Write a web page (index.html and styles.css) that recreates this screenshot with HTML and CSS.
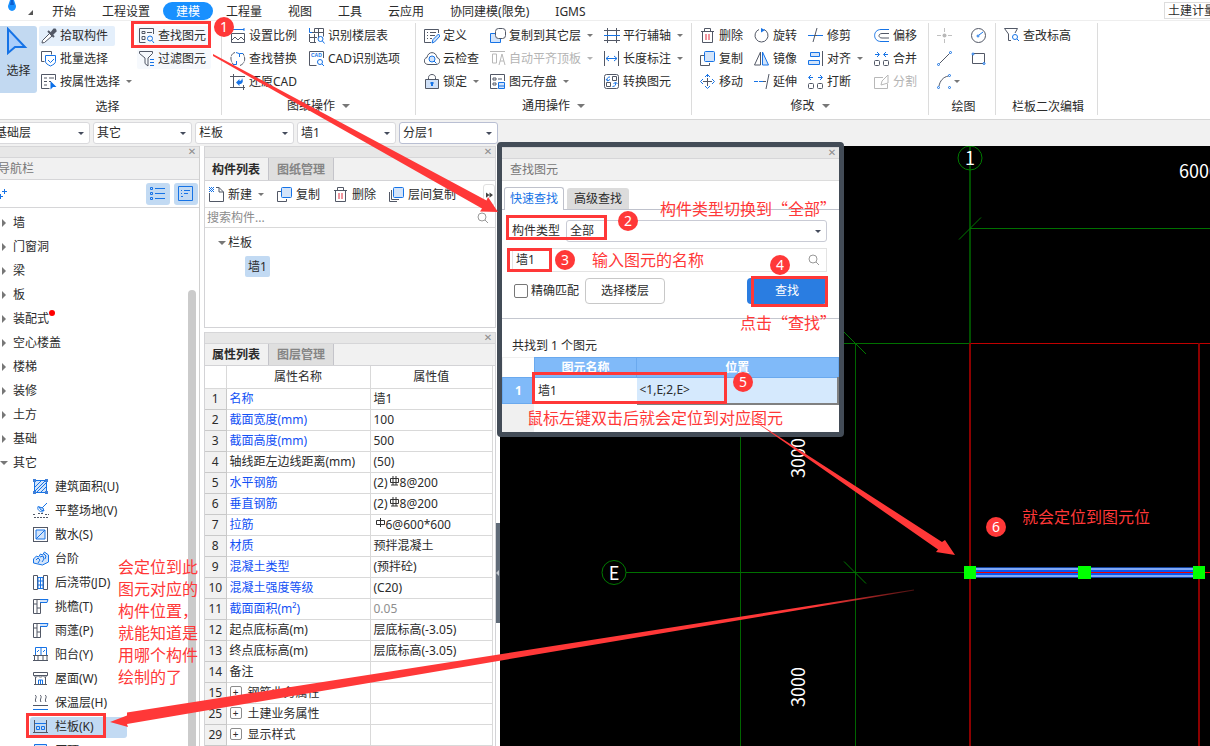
FILE: index.html
```html
<!DOCTYPE html>
<html lang="zh-CN">
<head>
<meta charset="utf-8">
<title>土建计量</title>
<link rel="stylesheet" href="styles.css">
</head>
<body>
<svg class="sprite" aria-hidden="true">
  <symbol id="pick" viewBox="0 0 16 16"><path d="M8.500 5.500l2.500 2.500-7.500 6.500L1 15l.5-2.500z" class="d w"/><path d="M7 3l6 6" stroke="#525866" stroke-width="2"/><path d="M9 5l3.500-4.500h2L15.500 2v1.500L11.500 7.500z" fill="#525866"/></symbol>
  <symbol id="batch" viewBox="0 0 16 16"><path d="M3.500 10.500H.5V.5h10v3" class="d"/><path d="M4.500 4.500h10v6c0 2-2 3-5 4.500-3-1.500-5-2.500-5-4.500z" class="b w"/><path d="M7 9l2.500 2.500L13 8" class="b"/></symbol>
  <symbol id="attr" viewBox="0 0 16 16"><path d="M14.500 6V.5H.5v14h8M3 4h3m2 0h5M3 7.500h3m2 0h2M3 11h3" class="d"/><path d="M9.500 7v8.500l2.500-2.500h3.500z" fill="#0b6fe8"/></symbol>
  <symbol id="find" viewBox="0 0 16 16"><path d="M14.500 6V.5H.5v14h6M3 3.500h3v2H3zM8 4.500h5M3 8.500h3v3H3z" class="d"/><circle cx="11" cy="10.500" r="2.500" class="b"/><path d="M13 12.500l2 2.500" class="b"/></symbol>
  <symbol id="filter" viewBox="0 0 16 16"><path d="M.5.5h13v2L9 7v8l-3-2.500V7L.5 2.500z" class="d"/><path d="M11 8.500h4M11 11.500h4M11 14.500h4" class="b"/></symbol>
  <symbol id="scale" viewBox="0 0 16 16"><path d="M1 1.500h13M1 0v3M14 0v3" class="b"/><path d="M1.500 5.500h13v9h-13zM2 12l3-3 3 3 3-3 3 3" class="d"/></symbol>
  <symbol id="replace" viewBox="0 0 16 16"><path d="M5 1.500C0 3 0 9 3 13M10 14.500c5-2 6-7 3-12" class="d" stroke-dasharray="5 1"/><path d="M3 13.500h3.500V10M13 2.500H9.500V6M6 1.500l3 1" class="b"/></symbol>
  <symbol id="restore" viewBox="0 0 16 16"><path d="M3.500 0v14M0 2.500h15M0 13.500h15M13.500 11v5" class="d"/><path d="M6 8.500L9.500 5v2C11 7 12 6 12 4c2 4 0 6-2.500 6v2z" fill="#1673e6"/></symbol>
  <symbol id="floor" viewBox="0 0 16 16"><path d="M5.500 4.500v-4h9v8M9.500 1v8M1 14.500h6M.5 6v8M5.500 6v8M1 4.500h13M1 9.500h7" class="d"/><path d="M.5 0v4.500H3" class="b"/><circle cx="11.500" cy="11" r="2.500" class="b"/><path d="M13.500 13l2 2.500" class="b"/></symbol>
  <symbol id="cad" viewBox="0 0 16 16"><path d="M14.500 7V.5H.5v14h7" class="d"/><text x="2" y="6" font-size="5" font-family="Liberation Sans" font-weight="700" fill="#1673e6">CAD</text><circle cx="11" cy="11" r="2.500" class="b"/><path d="M13 13l2 2" class="b"/></symbol>
  <symbol id="define" viewBox="0 0 16 16"><path d="M14.500 5V1.500h-14v13H7M3 4.500h1m2 0h6M3 7.500h1m2 0h5M3 10.500h1m2 0h2" class="d"/><path d="M8 15l1-3.500L14.500 6l1.500 2-5.500 6z" class="bf"/></symbol>
  <symbol id="cloud" viewBox="0 0 16 16"><path d="M4 13.500C-1 13-.5 7 3 6.500 4 0 12 0 13 6.500c4 1 3.500 7-1 7z" class="d"/><circle cx="8" cy="8" r="3" class="bf"/><path d="M10 10l2.500 2.500" class="b"/></symbol>
  <symbol id="lock" viewBox="0 0 16 16"><path d="M4.500 6V3.500c0-4 7-4 7 0V6" class="d"/><path d="M1.500 5.500h13v9h-13z" class="d tint"/><path d="M8 8v4M6.500 9h3" stroke="#1673e6" stroke-width="2"/></symbol>
  <symbol id="copyto" viewBox="0 0 16 16"><path d="M5 5.500H.5v9h10V11" class="bf"/><rect x="5.500" y=".5" width="10" height="10" rx="3" class="d w"/></symbol>
  <symbol id="aligntop" viewBox="0 0 16 16"><path d="M0 .5h15M2.500 3v9h4V3zM9 14l3-11 3 11M10 10h4" fill="none" stroke="#b8b8b8"/></symbol>
  <symbol id="savel" viewBox="0 0 16 16"><path d="M14.500 7V.5H.5v14h7M3 4h3v2H3zM8 5h4M3 9h3v2H3z" class="d"/><path d="M8.500 8.500h6v6h-6zM8.500 12h6" class="bf"/></symbol>
  <symbol id="axis" viewBox="0 0 16 16"><path d="M3.500 0v15M12.500 0v15M0 2.500h16M0 12.500h16" class="d"/><path d="M0 7.500h16" class="b"/></symbol>
  <symbol id="dim" viewBox="0 0 16 16"><path d="M.5 0v15M14.500 0v15" class="d"/><path d="M2 7.500h11M5 5L2 7.500 5 10M10 5l3 2.500-3 2.500" class="b"/></symbol>
  <symbol id="convert" viewBox="0 0 16 16"><rect x=".5" y=".5" width="14" height="14" rx="2" class="d"/><path d="M8.500 2.500h4v4h-4zM2.500 8.500h4v4h-4z" class="d"/><path d="M6 3C3 3 3 5 3.500 7M2 5l1.500 2L6 5.500M8.500 12.500c3 0 3.500-2 3-4M9.500 10l2-2 2 2" class="b"/></symbol>
  <symbol id="trash" viewBox="0 0 16 16"><path d="M1 3.500h13M4.500 3V.5h6V3M2.500 3.500v11h10v-11" class="d"/><path d="M6 6v6M9 6v6" stroke="#e02b3c" fill="none"/></symbol>
  <symbol id="copy" viewBox="0 0 16 16"><path d="M4 4.500H.5v10h9V12" class="d"/><rect x="4.500" y=".5" width="10" height="10" rx="1" class="bf"/></symbol>
  <symbol id="move" viewBox="0 0 16 16"><path d="M7.500 4v8M3 7.500h9" class="d"/><path d="M7.500 0v3M5 3l2.500-2.500L10 3M5 12l2.500 2.500L10 12M3 5L.5 7.500 3 10M12 5l2.500 2.500L12 10" class="b"/></symbol>
  <symbol id="rotate" viewBox="0 0 16 16"><path d="M10 1.500a6.500 6.500 0 1 1-5 0" class="d"/><path d="M7 0l4 2-4 2.500z" fill="#1673e6"/></symbol>
  <symbol id="mirror" viewBox="0 0 16 16"><path d="M6.500 1v13h-6z" class="d"/><path d="M8.500 1v13h6z" class="bf"/></symbol>
  <symbol id="extend" viewBox="0 0 16 16"><path d="M0 7.500h9" class="b" stroke-dasharray="4 1"/><path d="M9 7.500h3M15 0l-3 15" class="d"/></symbol>
  <symbol id="trim" viewBox="0 0 16 16"><path d="M5 7.500h4M9 0L5 14" class="d"/><path d="M0 7.500h6M9 7.500h7" class="b" stroke-dasharray="6 3 3 1 3"/></symbol>
  <symbol id="alignr" viewBox="0 0 16 16"><path d="M2.500 1.500h9v4h-9zM.5 9.500h11v4H.5z" class="bf"/><path d="M14.500 0v15" class="d"/></symbol>
  <symbol id="brk" viewBox="0 0 16 16"><rect x=".5" y="9.500" width="5" height="5" rx="1" class="d"/><rect x="9.500" y="9.500" width="5" height="5" rx="1" class="d"/><path d="M1 3.500h4M3 1L.5 3.500 3 6M14 3.500h-4M12 1l2.500 2.500L12 6" class="b"/></symbol>
  <symbol id="merge" viewBox="0 0 16 16"><rect x=".5" y="9.500" width="5" height="5" rx="1" class="d"/><rect x="9.500" y="9.500" width="5" height="5" rx="1" class="d"/><path d="M1 3.500h4M3 1l2.500 2.500L3 6M14 3.500h-4M12 1L9.500 3.500 12 6" class="b"/></symbol>
  <symbol id="offset" viewBox="0 0 16 16"><path d="M15 1.500H7C-1.500 1.500-1.500 13.500 7 13.500h8" class="b"/><path d="M15 5.500H8C4 5.500 4 10 8 10h7" class="d"/></symbol>
  <symbol id="split" viewBox="0 0 16 16"><path d="M9 3.500H.5v11h13V10M7 11l1-4 6-6v8z" fill="none" stroke="#b8b8b8"/></symbol>
  <symbol id="point" viewBox="0 0 16 16"><path d="M7.500 0v4M7.500 11v4M0 7.500h4M11 7.500h4" stroke="#c0c0c0"/><circle cx="7.500" cy="7.500" r="2" fill="#b8b8b8"/></symbol>
  <symbol id="circ" viewBox="0 0 16 16"><circle cx="7.500" cy="7.500" r="7" class="d"/><circle cx="7" cy="8" r="1" class="b"/><path d="M8 7l4-3" class="b"/></symbol>
  <symbol id="line" viewBox="0 0 16 16"><path d="M2.500 12.500l10-10" class="d"/><circle cx="1.500" cy="13.500" r="1" class="b"/><circle cx="13.500" cy="1.500" r="1" class="b"/></symbol>
  <symbol id="rct" viewBox="0 0 16 16"><path d="M2.500 2.500h11v10h-12v-9" class="d"/><circle cx="2" cy="3" r="1" class="b w"/><circle cx="13" cy="12.500" r="1" class="b w"/></symbol>
  <symbol id="arc" viewBox="0 0 16 16"><path d="M2 12C3 7 6 3 11.500 2" class="d"/><circle cx="1.500" cy="13.500" r="1" class="b"/><circle cx="12.500" cy="1.500" r="1" class="b"/><circle cx="12.500" cy="13.500" r="1" class="b"/></symbol>
  <symbol id="elev" viewBox="0 0 16 16"><path d="M7 12.500H4.500V6L.5.500h13L11 5" class="d"/><circle cx="11" cy="9" r="2.500" class="b"/><path d="M13 11l2 2" class="b"/></symbol>
  <symbol id="newdoc" viewBox="0 0 16 16"><path d="M.5 6v8.500h14V5L10 .5H7M10 .5V5h4.500" class="d"/><path d="M0 .5h5M0 2.500h5M0 4.500h5" stroke="#1673e6" stroke-dasharray="1 1"/><path d="M1 1.500h4M1 3.500h4" stroke="#1673e6" stroke-dasharray="1 1"/></symbol>
  <symbol id="layercopy" viewBox="0 0 16 16"><path d="M.5 5v9.500H8M2.500 3v9.500H10" class="d"/><rect x="4.500" y=".5" width="10" height="10" rx="1" class="bf"/></symbol>
  <symbol id="area" viewBox="0 0 16 16"><path d="M1.500 1.500h12v12h-12zM2 8l6-6M2 12l10-10M4 13l9-9M8 13l5-5" class="bf"/><path d="M0 0h3v3H0zM12 0h3v3h-3zM0 12h3v3H0zM12 12h3v3h-3z" fill="#3f7fd8"/></symbol>
  <symbol id="ground" viewBox="0 0 16 16"><path d="M5 3.500c-1 3 1 5 5 5.500M5 3.500l2 1M8 6l6-6" class="b"/><path d="M6 4l4 1 1 3-3-1z" class="bf"/><path d="M0 11.500h3m2-1h5m2 1h4M1 14.500h14" class="d" stroke-dasharray="2 1"/></symbol>
  <symbol id="water" viewBox="0 0 16 16"><rect x=".5" y=".5" width="14" height="14" class="d"/><path d="M3 3h9v9H3zM3 12l9-9" class="bf"/></symbol>
  <symbol id="stair" viewBox="0 0 16 16"><path d="M.5 8l3-3 2 1 2-3 2 1 2-3 4 3v7l-6 3-9-2z" class="bf"/><path d="M3 9l2-2 2 2-2 3M7 6l3-1 1 3-2 3M11 3l2 2-1 3" class="b"/></symbol>
  <symbol id="strip" viewBox="0 0 16 16"><path d="M.5.5h4v14h-4zM10.500.5h4v14h-4z" class="d"/><path d="M5 2.500h5v11H5zM7.500 2v12M5 6h5M5 10h5" class="b"/></symbol>
  <symbol id="eave" viewBox="0 0 16 16"><path d="M.5.500h7v14h-7zM4 1v14M.5 5h3.500M4 9h3.500" class="d"/><path d="M7 .5h8l-1 3H7" class="bf"/></symbol>
  <symbol id="balcony" viewBox="0 0 16 16"><path d="M2.500 8V.5h11V8M8 1v8M4 5l2-2M10 5l2-2" class="b"/><path d="M0 8.500h15M0 13.500h15M1.500 8.500v5M5 8.500v5M10 8.500v5M14 8.500v5" class="d"/></symbol>
  <symbol id="roof" viewBox="0 0 16 16"><path d="M.5 1.500h14v3H.5zM2.500 6v7.500M12.500 6v7.500M1 13.500h13M1 4.500c1 2 3 2 4 0 1 2 4 2 5 0 1 2 3 2 4 0" class="d"/><path d="M5.500 13V9h4v4M7.500 9v4" class="b"/></symbol>
  <symbol id="insul" viewBox="0 0 16 16"><path d="M2 0c3 2-1 4 1 7M7 0c3 2-1 4 1 7M12 0c3 2-1 4 1 7M0 10.500h15" class="d"/><path d="M0 14.500h15" class="b"/></symbol>
  <symbol id="rail" viewBox="0 0 16 16"><path d="M1.500 1v12M13.500 1v12M0 13.500h15" class="d"/><path d="M2 4.500h11M3.500 7.500h3v3h-3zM8.500 7.500h3v3h-3z" class="b"/></symbol>
  <symbol id="coping" viewBox="0 0 16 16"><path d="M1.500 1.500h12v13h-12z" class="bf"/></symbol>
  <symbol id="search" viewBox="0 0 16 16"><circle cx="7" cy="7" r="4" fill="none" stroke="#999"/><path d="M10 10l3 3" stroke="#999"/></symbol>
  <symbol id="list" viewBox="0 0 16 16"><path d="M.5 1.500h2v2h-2zM.5 6.500h2v2h-2zM.5 11.500h2v2h-2zM5 2.500h10M5 7.500h10M5 12.500h10" class="b"/></symbol>
  <symbol id="card" viewBox="0 0 16 16"><path d="M.5.500h14v14H.5zM3 4.500h1m2 0h6M3 7.500h1m2 0h4M3 10.500h2" class="b"/></symbol>
  <symbol id="r3" viewBox="0 0 10 12"><path d="M.5 2.500h8v4h-8zM3 0v9M6 0v9M1 9h7" fill="none" stroke="#333"/></symbol>
  <symbol id="r1" viewBox="0 0 10 12"><path d="M.5 2.500h8v4h-8zM4.500 0v9" fill="none" stroke="#333"/></symbol>
</svg>

<header class="menubar">
  <svg class="app-logo" viewBox="0 0 12 13"><path d="M4 0h4l2 6a4 5 0 1 1-8 0z" fill="#1890ff"/><path d="M5 0h2l1 5H4z" fill="#0c5fd0"/></svg>
  <svg class="app-corner" viewBox="0 0 5 5"><path d="M5 0v5H0z" fill="#555"/></svg>
  <nav class="menu">
    <button>开始</button><button>工程设置</button><button class="active">建模</button><button>工程量</button><button>视图</button><button>工具</button><button>云应用</button><button>协同建模(限免)</button><button>IGMS</button>
  </nav>
  <div class="product">土建计量</div>
</header>

<section class="ribbon">
  <div class="group g-select">
    <div class="tools">
      <button class="big"><svg viewBox="0 0 24 28"><path d="M3 2v24l7-6h10z" fill="#a9cdfb" stroke="#1673e6" stroke-width="2"/></svg>选择</button>
      <div class="grid">
        <button class="tool hot"><svg><use href="#pick"/></svg>拾取构件</button>
        <button class="tool"><svg><use href="#batch"/></svg>批量选择</button>
        <button class="tool"><svg><use href="#attr"/></svg>按属性选择<i class="caret"></i></button>
        <button class="tool warm"><svg><use href="#find"/></svg>查找图元</button>
        <button class="tool warm"><svg><use href="#filter"/></svg>过滤图元</button>
      </div>
    </div>
    <div class="label low">选择</div>
  </div>
  <div class="group g-drawing">
    <div class="grid">
      <button class="tool"><svg><use href="#scale"/></svg>设置比例</button>
      <button class="tool"><svg><use href="#replace"/></svg>查找替换</button>
      <button class="tool"><svg><use href="#restore"/></svg>还原CAD</button>
      <button class="tool"><svg><use href="#floor"/></svg>识别楼层表</button>
      <button class="tool"><svg><use href="#cad"/></svg>CAD识别选项</button>
    </div>
    <div class="label">图纸操作<i class="caret wide"></i></div>
  </div>
  <div class="group g-common">
    <div class="grid">
      <button class="tool"><svg><use href="#define"/></svg>定义</button>
      <button class="tool"><svg><use href="#cloud"/></svg>云检查</button>
      <button class="tool"><svg><use href="#lock"/></svg>锁定<i class="caret"></i></button>
      <button class="tool"><svg><use href="#copyto"/></svg>复制到其它层<i class="caret"></i></button>
      <button class="tool" disabled><svg><use href="#aligntop"/></svg>自动平齐顶板<i class="caret"></i></button>
      <button class="tool"><svg><use href="#savel"/></svg>图元存盘<i class="caret"></i></button>
      <button class="tool"><svg><use href="#axis"/></svg>平行辅轴<i class="caret"></i></button>
      <button class="tool"><svg><use href="#dim"/></svg>长度标注<i class="caret"></i></button>
      <button class="tool"><svg><use href="#convert"/></svg>转换图元</button>
    </div>
    <div class="label">通用操作<i class="caret wide"></i></div>
  </div>
  <div class="group g-modify">
    <div class="grid">
      <button class="tool"><svg><use href="#trash"/></svg>删除</button>
      <button class="tool"><svg><use href="#copy"/></svg>复制</button>
      <button class="tool"><svg><use href="#move"/></svg>移动</button>
      <button class="tool"><svg><use href="#rotate"/></svg>旋转</button>
      <button class="tool"><svg><use href="#mirror"/></svg>镜像</button>
      <button class="tool"><svg><use href="#extend"/></svg>延伸</button>
      <button class="tool"><svg><use href="#trim"/></svg>修剪</button>
      <button class="tool"><svg><use href="#alignr"/></svg>对齐<i class="caret"></i></button>
      <button class="tool"><svg><use href="#brk"/></svg>打断</button>
      <button class="tool"><svg><use href="#offset"/></svg>偏移</button>
      <button class="tool"><svg><use href="#merge"/></svg>合并</button>
      <button class="tool" disabled><svg><use href="#split"/></svg>分割</button>
    </div>
    <div class="label">修改<i class="caret wide"></i></div>
  </div>
  <div class="group g-draw">
    <div class="grid">
      <button class="tool" aria-label="点"><svg><use href="#point"/></svg></button>
      <button class="tool" aria-label="直线"><svg><use href="#line"/></svg></button>
      <button class="tool" aria-label="弧"><svg><use href="#arc"/></svg><i class="caret near"></i></button>
      <button class="tool" aria-label="圆"><svg><use href="#circ"/></svg></button>
      <button class="tool" aria-label="矩形"><svg><use href="#rct"/></svg></button>
    </div>
    <div class="label low">绘图</div>
  </div>
  <div class="group g-edit">
    <div class="grid"><button class="tool"><svg><use href="#elev"/></svg>查改标高</button></div>
    <div class="label low">栏板二次编辑</div>
  </div>
</section>

<section class="combobar">
  <span class="combo"><select aria-label="楼层"><option>基础层</option></select></span>
  <span class="combo"><select aria-label="分类"><option>其它</option></select></span>
  <span class="combo"><select aria-label="构件类型"><option>栏板</option></select></span>
  <span class="combo"><select aria-label="构件"><option>墙1</option></select></span>
  <span class="combo focus"><select aria-label="分层"><option>分层1</option></select></span>
</section>

<main class="workspace">
  <aside class="nav">
    <div class="bar"><button class="close" aria-label="关闭">✕</button></div>
    <h2 class="nav-title">导航栏</h2>
    <div class="nav-tools">
      <svg class="plus" viewBox="0 0 8 12"><path d="M4.500 1v5M2 3.500h5M.5 6v5M0 8.500h3" class="b"/></svg>
      <button aria-label="列表"><svg><use href="#list"/></svg></button>
      <button aria-label="详情"><svg><use href="#card"/></svg></button>
    </div>
    <ul class="tree">
      <li><i class="tri"></i>墙</li>
      <li><i class="tri"></i>门窗洞</li>
      <li><i class="tri"></i>梁</li>
      <li><i class="tri"></i>板</li>
      <li><i class="tri"></i>装配式<i class="dot"></i></li>
      <li><i class="tri"></i>空心楼盖</li>
      <li><i class="tri"></i>楼梯</li>
      <li><i class="tri"></i>装修</li>
      <li><i class="tri"></i>土方</li>
      <li><i class="tri"></i>基础</li>
      <li><i class="tri open"></i>其它</li>
      <li class="sub"><span><svg><use href="#area"/></svg>建筑面积(U)</span></li>
      <li class="sub"><span><svg><use href="#ground"/></svg>平整场地(V)</span></li>
      <li class="sub"><span><svg><use href="#water"/></svg>散水(S)</span></li>
      <li class="sub"><span><svg><use href="#stair"/></svg>台阶</span></li>
      <li class="sub"><span><svg><use href="#strip"/></svg>后浇带(JD)</span></li>
      <li class="sub"><span><svg><use href="#eave"/></svg>挑檐(T)</span></li>
      <li class="sub"><span><svg><use href="#eave"/></svg>雨蓬(P)</span></li>
      <li class="sub"><span><svg><use href="#balcony"/></svg>阳台(Y)</span></li>
      <li class="sub"><span><svg><use href="#roof"/></svg>屋面(W)</span></li>
      <li class="sub"><span><svg><use href="#insul"/></svg>保温层(H)</span></li>
      <li class="sub chosen"><span><svg><use href="#rail"/></svg>栏板(K)</span></li>
      <li class="sub"><span><svg><use href="#coping"/></svg>压顶</span></li>
    </ul>
    <div class="thumb"></div>
  </aside>

  <div class="middle">
    <section class="panel components">
      <div class="bar"><button class="close" aria-label="关闭">✕</button></div>
      <div class="tabs"><button class="on">构件列表</button><button>图纸管理</button></div>
      <div class="panel-tools">
        <button class="tool"><svg><use href="#newdoc"/></svg>新建<i class="caret"></i></button>
        <button class="tool"><svg><use href="#copy"/></svg>复制</button>
        <button class="tool"><svg><use href="#trash"/></svg>删除</button>
        <button class="tool"><svg><use href="#layercopy"/></svg>层间复制</button>
        <button class="more" aria-label="更多"><svg viewBox="0 0 8 6"><path d="M0 0l4 3-4 3zM4 0l4 3-4 3z" fill="#444"/></svg></button>
      </div>
      <div class="search"><input type="text" placeholder="搜索构件..." aria-label="搜索构件"><svg><use href="#search"/></svg></div>
      <ul class="comp-tree">
        <li><i class="tri open"></i>栏板<ul><li><span>墙1</span></li></ul></li>
      </ul>
    </section>
    <section class="panel props">
      <div class="bar"><button class="close" aria-label="关闭">✕</button></div>
      <div class="tabs"><button class="on">属性列表</button><button>图层管理</button></div>
      <table class="prop-table">
        <colgroup><col class="c-no"><col class="c-name"><col></colgroup>
        <thead><tr><th></th><th>属性名称</th><th>属性值</th></tr></thead>
        <tbody>
          <tr><th>1</th><td class="key">名称</td><td>墙1</td></tr>
          <tr><th>2</th><td class="key">截面宽度(mm)</td><td>100</td></tr>
          <tr><th>3</th><td class="key">截面高度(mm)</td><td>500</td></tr>
          <tr><th>4</th><td>轴线距左边线距离(mm)</td><td>(50)</td></tr>
          <tr><th>5</th><td class="key">水平钢筋</td><td>(2)<svg class="bar-mark"><use href="#r3"/></svg>8@200</td></tr>
          <tr><th>6</th><td class="key">垂直钢筋</td><td>(2)<svg class="bar-mark"><use href="#r3"/></svg>8@200</td></tr>
          <tr><th>7</th><td class="key">拉筋</td><td><svg class="bar-mark"><use href="#r1"/></svg>6@600*600</td></tr>
          <tr><th>8</th><td class="key">材质</td><td>预拌混凝土</td></tr>
          <tr><th>9</th><td class="key">混凝土类型</td><td>(预拌砼)</td></tr>
          <tr><th>10</th><td class="key">混凝土强度等级</td><td>(C20)</td></tr>
          <tr><th>11</th><td class="key">截面面积(m²)</td><td class="muted">0.05</td></tr>
          <tr><th>12</th><td>起点底标高(m)</td><td>层底标高(-3.05)</td></tr>
          <tr><th>13</th><td>终点底标高(m)</td><td>层底标高(-3.05)</td></tr>
          <tr><th>14</th><td>备注</td><td></td></tr>
          <tr><th>15</th><td><button class="expand">+</button>钢筋业务属性</td><td></td></tr>
          <tr><th>25</th><td><button class="expand">+</button>土建业务属性</td><td></td></tr>
          <tr><th>29</th><td><button class="expand">+</button>显示样式</td><td></td></tr>
        </tbody>
      </table>
    </section>
  </div>

  <div class="splitter"><button aria-label="收起"><i></i></button></div>

  <section class="canvas">
    <svg class="drawing">
      <g transform="translate(-500 -146)" fill="none">
        <g stroke="#006400">
          <path d="M740.500 430V2000M855.500 343V2000"/>
          <path d="M970 146v197" stroke="#004f00" stroke-width="2"/>
          <path d="M970 228.500h2000M626 572.500h340M840 343.500h130" stroke="#007000"/>
          <path d="M959 239.500l22-22M844 332l22 22M844 561.500l22 22" stroke="#007a00"/>
          <circle cx="970" cy="158" r="12" stroke="#007a00"/><circle cx="614" cy="572.500" r="12" stroke="#007a00"/>
        </g>
        <path d="M970 343.500h2000" stroke="#c00000"/>
        <path d="M970 343V2000M1199 343V2000" stroke="#8b0000" stroke-width="2"/>
        <rect x="970" y="567" width="229" height="11" fill="#11419a"/>
        <rect x="970" y="568" width="229" height="9" fill="#7fa8f8"/>
        <rect x="970" y="570" width="229" height="5" fill="#0a55f0"/>
        <path d="M970 572.500h2000" stroke="#f00000"/>
        <path d="M964 566h12v13h-12zM1078 566h13v13h-13zM1193 566h12v13h-12z" fill="#0f0"/>
        <g class="cad-text">
          <text x="970" y="165" text-anchor="middle">1</text><text x="614" y="580" text-anchor="middle">E</text>
          <text x="1179" y="178">6000</text>
          <text transform="translate(805 478) rotate(-90)">3000</text><text transform="translate(805 707) rotate(-90)">3000</text>
        </g>
      </g>
    </svg>
  </section>
</main>

<section class="dialog" role="dialog" aria-label="查找图元">
  <div class="bar"><button class="close" aria-label="关闭">✕</button></div>
  <h2 class="dialog-title">查找图元</h2>
  <div class="dialog-tabs"><button class="on">快速查找</button><button>高级查找</button></div>
  <form class="finder">
    <div class="row"><label for="kind">构件类型</label><span class="combo grow"><select id="kind"><option>全部</option></select></span></div>
    <div class="query"><input type="text" value="墙1" aria-label="图元名称"><svg><use href="#search"/></svg></div>
    <div class="row actions"><input type="checkbox" id="exact"><label for="exact">精确匹配</label><button type="button" class="plain">选择楼层</button><button type="button" class="primary">查找</button></div>
  </form>
  <p class="count">共找到 1 个图元</p>
  <div class="results">
  <table>
    <colgroup><col class="r-no"><col class="r-name"><col></colgroup>
    <thead><tr><td></td><th>图元名称</th><th>位置</th></tr></thead>
    <tbody><tr><th>1</th><td>墙1</td><td class="sel">&lt;1,E;2,E&gt;</td></tr></tbody>
  </table>
  </div>
</section>

<div class="notes">
  <svg class="arrows">
    <defs><linearGradient id="fade" x1="1" x2="0"><stop offset="0" stop-color="#ff3838" stop-opacity=".3"/><stop offset=".12" stop-color="#ff3838"/></linearGradient></defs>
    <g fill="#ff3838">
      <path d="M213 54L486.500 200.500 488 197 498 212 480 211.500 482 208.500 213 56z"/>
      <path d="M744 414L942 542 945 540 955 555 936 552 938 549.500z"/>
      <path d="M914 589.500L127 712.500V715.500L110 722 128 727 127 724 914 590.500z" fill="url(#fade)"/>
    </g>
    <g fill="none" stroke="#ff3838" stroke-width="3">
      <path d="M132.500 22.500h77v24h-77zM507.500 216.500h98v22h-98zM508.500 249.500h42v21h-42zM752.500 277.500h74v28h-74zM533.500 373.500h192v29h-192zM27.500 714.500h77v22h-77z"/>
    </g>
  </svg>
  <b class="badge n1">1</b><b class="badge n2">2</b><b class="badge n3">3</b><b class="badge n4">4</b><b class="badge n5">5</b><b class="badge n6">6</b>
  <p class="t-kind">构件类型切换到“全部”</p>
  <p class="t-name">输入图元的名称</p>
  <p class="t-click">点击“查找”</p>
  <p class="t-dbl">鼠标左键双击后就会定位到对应图元</p>
  <p class="t-pos">就会定位到图元位</p>
  <p class="t-side">会定位到此<br>图元对应的<br>构件位置，<br>就能知道是<br>用哪个构件<br>绘制的了</p>
</div>
</body>
</html>
```
FILE: styles.css
```css
* { box-sizing: border-box; }
body {
  margin: 0;
  height: 100vh;
  display: flex;
  flex-direction: column;
  position: relative;
  overflow: hidden;
  background: #fff;
  color: #2b2b2b;
  font: 12px/16px "Noto Sans", "Noto Sans CJK SC", sans-serif;
}
button, input, select { font: inherit; color: inherit; margin: 0; padding: 0; border: 0; background: none; }
button { white-space: nowrap; }
ul { list-style: none; margin: 0; padding: 0; }
h2, p { margin: 0; font-weight: 400; }
svg { width: 16px; height: 16px; flex: none; display: block; }
.sprite { position: absolute; width: 0; height: 0; }
.d { fill: none; stroke: #525866; }
.b { fill: none; stroke: #1673e6; }
.bf { fill: #d3e4fa; stroke: #1673e6; }
.w { fill: #fff; }
.tint { fill: #cfe0f7; }
.caret { flex: none; margin-left: 3px; border: 3px solid transparent; border-top-color: #777; border-bottom: 0; }
.caret.near { margin-left: -2px; }
.caret.wide { margin-left: 7px; border-width: 4px 4px 0; }

.menubar { display: flex; height: 21px; border-bottom: 1px solid #eee; }
.app-logo { width: 12px; height: 13px; margin-left: 6px; }
.app-corner { width: 5px; height: 5px; margin: 10px 0 0 10px; }
.menu { display: flex; padding: 2px 0 0 6px; }
.menu button { height: 18px; padding: 1px 13px 0; line-height: 18px; }
.menu .active { background: #1890ff; color: #fff; border-radius: 9px; }
.product { margin: 2px 0 1px auto; width: 46px; padding-left: 3px; overflow: hidden; white-space: nowrap; border: 1px solid #ddd; border-right: 0; line-height: 16px; }

.ribbon { display: flex; height: 99px; flex: none; padding: 2px 0 4px; border-bottom: 1px solid #d6d6d6; }
.group { flex: none; padding-left: 6px; border-right: 1px solid #dcdcdc; }
.g-select { width: 222px; padding-left: 0; }
.g-drawing { width: 194px; }
.g-common { width: 276px; }
.g-modify { width: 237px; }
.g-draw { width: 67px; }
.g-edit { width: 102px; }
.tools { display: flex; gap: 2px; }
.grid { display: grid; grid-auto-flow: column; grid-template-rows: repeat(3, 23px); column-gap: 7px; padding-top: 1px; justify-content: start; align-items: center; }
.g-select .grid { column-gap: 3px; }
.g-drawing .grid { column-gap: 8px; }
.tool { display: flex; align-items: center; justify-self: start; height: 20px; gap: 3px; padding: 0 2px; border-radius: 2px; white-space: nowrap; }
.tool:disabled { color: #b4b4b4; }
.tool:disabled .caret { border-top-color: #b4b4b4; }
.hot { background: #e4effb; padding-right: 7px; }
.warm { background: #f6f9fd; padding-right: 5px; }
.big { display: flex; flex-direction: column; align-items: center; gap: 8px; width: 37px; height: 67px; margin-top: 3px; padding-top: 1px; background: #c2d9f1; border-radius: 0 3px 3px 0; }
.big svg { width: 24px; height: 28px; margin-right: 4px; }
.label { display: flex; align-items: center; justify-content: center; height: 22px; padding: 3px 6px 0 0; }
.label.low { padding-top: 6px; }
.g-draw .label, .g-edit .label { padding-right: 3px; }

.combobar { display: flex; flex: none; gap: 3px; height: 26px; padding: 2px 0; margin-left: -9px; background: #f1f1f1; }
.combo { position: relative; display: block; width: 99px; height: 22px; border: 1px solid #d9d9dc; border-radius: 3px; background: #fff; }
.combo select { appearance: none; width: 100%; height: 20px; padding-left: 3px; }
.combo::after { content: ""; position: absolute; right: 5px; top: 9px; border: 3px solid transparent; border-top-color: #444b5c; border-bottom: 0; pointer-events: none; }
.combo.focus { border-color: #b9bfd3; }
.combo.grow { flex: 1; border-color: #c9cbd5; }

.workspace { display: flex; flex: 1; min-height: 0; }
.bar { display: flex; justify-content: flex-end; align-items: center; height: 12px; padding-right: 2px; background: #e7e7e7; border: solid #d6d6d8; border-width: 1px 0; }
.close { width: 10px; color: #8c8c8c; font: 10px/10px "DejaVu Sans", sans-serif; }
.nav { position: relative; flex: none; width: 200px; overflow: hidden; border-right: 1px solid #d0d0d0; }
.nav-title { height: 22px; line-height: 21px; margin-left: -2px; background: #f1f1f1; border-bottom: 1px solid #d6d6d8; color: #777; font-size: 12px; }
.nav-tools { display: flex; align-items: center; gap: 4px; height: 28px; padding-right: 1px; border-bottom: 1px solid #d6d6d8; }
.nav-tools .plus { width: 8px; height: 12px; margin-right: auto; }
.nav-tools button { display: grid; place-items: center; width: 24px; height: 22px; background: #c2daf3; border-radius: 3px; }
.tree { padding-top: 3px; }
.tree li { display: flex; align-items: center; height: 24px; padding-left: 2px; }
.tri { flex: none; width: 4px; margin-right: 7px; border: 4px solid transparent; border-left-color: #777; border-right: 0; }
.tri.open { width: 8px; margin: 0 5px 0 -2px; border: 4px solid transparent; border-top-color: #777; border-bottom: 0; }
.dot { align-self: flex-start; width: 6px; height: 6px; margin-top: 3px; border-radius: 3px; background: #f00; }
.tree .sub { padding-left: 30px; }
.sub span { display: flex; align-items: center; gap: 6px; height: 21px; padding-left: 3px; }
.chosen span { width: 97px; background: #c2daf3; border-radius: 3px; }
.thumb { position: absolute; top: 144px; bottom: 0; right: 3px; width: 8px; border-radius: 4px 4px 0 0; background: #cbcbcb; }

.middle { display: flex; flex-direction: column; gap: 4px; flex: none; width: 292px; margin-left: 4px; }
.panel { border: solid #d3d3d6; border-width: 0 1px 1px; }
.props { flex: 1; border-bottom: 0; min-height: 0; overflow: hidden; }
.tabs { display: flex; height: 23px; background: #f1f1f1; border-bottom: 1px solid #d3d3d6; }
.props .tabs { height: 22px; }
.tabs button { padding: 1px 8px 0; color: #858585; font-weight: 700; background: #dfdfdf; border-right: 1px solid #c4c4ca; }
.tabs .on { padding: 1px 8px 0 7px; color: #2b2b2b; background: #f1f1f1; }
.panel-tools { display: flex; align-items: center; gap: 9px; height: 27px; padding: 1px 0 0 2px; border-bottom: 1px solid #e0e0e0; }
.more { margin-left: auto; height: 22px; width: 12px; padding: 0 2px; border: 1px solid #e0e0e0; border-radius: 3px; }
.more svg { width: 7px; height: 6px; }
.search { display: flex; align-items: center; height: 20px; padding: 1px 4px 0 2px; border-bottom: 1px solid #d9d9d9; }
.search input { flex: 1; min-width: 0; }
.search input::placeholder { color: #8c8c8c; opacity: 1; }
.comp-tree { height: 99px; padding: 6px 0 0 12px; }
.comp-tree .tri { display: inline-block; vertical-align: 2px; margin: 0 2px 0 1px; }
.comp-tree li { line-height: 18px; }
.comp-tree ul { margin: 4px 0 0 28px; }
.comp-tree span { display: inline-block; line-height: 21px; padding: 0 3px; border-radius: 2px; background: #c2daf3; }

.prop-table { width: calc(100% - 2px); border-collapse: collapse; table-layout: fixed; }
.c-no { width: 21px; }
.c-name { width: 144px; }
.prop-table th, .prop-table td { height: 21px; padding: 0 3px; line-height: 18px; border: solid #d9d9d9; border-width: 0 1px 1px 0; text-align: left; white-space: nowrap; overflow: hidden; font-weight: 400; }
.prop-table thead th { text-align: center; height: 22px; }
.prop-table tbody th { text-align: center; padding: 0; background: #f1f1f1; border-color: #c9c9c9; }
.prop-table .key { color: #1251f5; }
.prop-table .muted { color: #8e8e8e; }
.bar-mark { display: inline-block; width: 10px; height: 12px; margin-left: 2px; vertical-align: -1px; }
.expand { width: 12px; height: 12px; margin-right: 6px; font-size: 10px; line-height: 9px; border: 1px solid #8c8c8c; border-radius: 2px; vertical-align: 1px; }
.splitter { flex: none; width: 4px; padding-top: 377px; }
.splitter button { display: grid; align-items: center; width: 4px; height: 100px; background: #606b78; }
.splitter i { border: 3px solid transparent; border-right-color: #c4c9cf; border-left: 0; width: 3px; }
.canvas { flex: 1; min-width: 0; background: #000; overflow: hidden; }
.drawing { width: 100%; height: 100%; }
.cad-text { fill: #fff; font: 18px "Noto Sans CJK SC", sans-serif; }

.dialog { position: absolute; left: 497px; top: 142px; width: 347px; height: 295px; display: flex; flex-direction: column; border: 5px solid #434c57; border-radius: 4px; background: #fff; }
.dialog-title { height: 22px; padding-left: 8px; line-height: 21px; font-size: 12px; color: #777; background: #f1f1f1; border-bottom: 1px solid #dcdcdc; }
.dialog-tabs { display: flex; align-items: flex-end; gap: 3px; height: 29px; padding-left: 2px; border-bottom: 1px solid #bfc2cc; }
.dialog-tabs button { height: 21px; padding: 0 7px; background: #dcdcdc; border-radius: 3px 3px 0 0; }
.dialog-tabs .on { height: 23px; padding: 0 5px; margin-bottom: -1px; color: #1673e6; background: #fff; border: 1px solid #bfc2cc; border-bottom: 0; }
.finder { display: flex; flex-direction: column; gap: 6px; height: 109px; padding: 10px 12px 0 10px; border-bottom: 1px solid #c4c7cf; }
.row { display: flex; align-items: center; }
.row label { margin-right: 6px; }
.query { display: flex; align-items: center; height: 24px; padding: 0 4px 0 3px; border: 1px solid #e3e3e3; }
.query input { flex: 1; min-width: 0; }
.actions input { width: 14px; height: 14px; margin: 0 3px 0 2px; appearance: none; border: 1px solid #777; border-radius: 2px; }
.actions button { height: 26px; width: 80px; border-radius: 4px; }
.plain { border: 1px solid #c8c8c8; }
.primary { margin-left: auto; background: #2a7de1; color: #fff; }
.count { padding: 19px 0 3px 10px; }
.results { flex: 1; background: linear-gradient(90deg, #f0f0f0 32px, #fff 32px); }
.results table { width: 100%; border-collapse: collapse; table-layout: fixed; }
.r-no { width: 32px; }
.r-name { width: 102px; }
.results th { height: 20px; padding: 0; line-height: 18px; color: #fff; background: #80baf9; border: 1px solid #6aa9ee; }
.results td { padding: 0 3px; background: #fff; }
.results tbody td, .results tbody th { height: 26px; }
.results .sel { background: #d5e9fd; border: solid #808080; border-width: 0 2px 2px 0; }

.notes { position: absolute; inset: 0; pointer-events: none; color: #ff3838; font: 16px/22px "Noto Sans CJK SC", sans-serif; }
.arrows { width: 100%; height: 100%; }
.notes p, .badge { position: absolute; white-space: nowrap; }
.badge { width: 20px; height: 20px; border-radius: 10px; background: #ff3838; color: #fff; font: 14px/20px "Noto Sans", sans-serif; text-align: center; }
.n1 { left: 214px; top: 17px; }
.n2 { left: 618px; top: 211px; }
.n3 { left: 555px; top: 250px; }
.n4 { left: 770px; top: 255px; }
.n5 { left: 733px; top: 372px; }
.n6 { left: 986px; top: 517px; }
.t-kind { left: 660px; top: 197px; }
.t-name { left: 592px; top: 248px; }
.t-click { left: 740px; top: 311px; }
.t-dbl { left: 527px; top: 406px; }
.t-pos { left: 1022px; top: 505px; }
.t-side { left: 118px; top: 555px; }
```
